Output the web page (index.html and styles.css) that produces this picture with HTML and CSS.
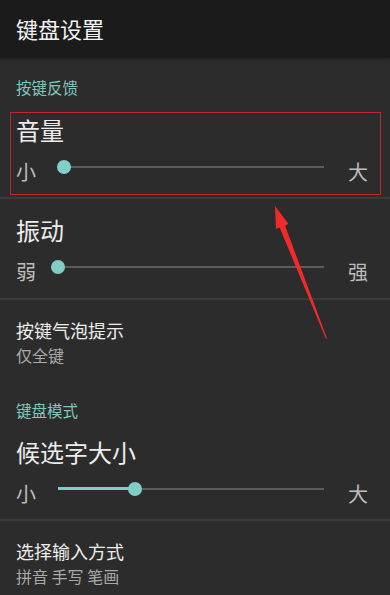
FILE: index.html
```html
<!DOCTYPE html>
<html lang="zh-CN">
<head>
<meta charset="utf-8">
<link rel="stylesheet" href="styles.css">
</head>
<body>
<div class="screen">
  <header class="appbar"><span class="appbar-title">键盘设置</span></header>

  <div class="section-head">按键反馈</div>

  <div class="item item-first">
    <div class="item-title">音量</div>
    <div class="slider-row">
      <span class="slider-label">小</span>
      <div class="slider">
        <div class="track"></div>
        <div class="thumb" style="left:0px"></div>
      </div>
      <span class="slider-label">大</span>
    </div>
  </div>
  <div class="divider"></div>

  <div class="item item-slider">
    <div class="item-title">振动</div>
    <div class="slider-row">
      <span class="slider-label">弱</span>
      <div class="slider">
        <div class="track"></div>
        <div class="thumb" style="left:-6px"></div>
      </div>
      <span class="slider-label">强</span>
    </div>
  </div>
  <div class="divider"></div>

  <div class="item item-text">
    <div class="text-title">按键气泡提示</div>
    <div class="text-sub">仅全键</div>
  </div>

  <div class="section-head section-head-2">键盘模式</div>

  <div class="item item-first">
    <div class="item-title">候选字大小</div>
    <div class="slider-row">
      <span class="slider-label">小</span>
      <div class="slider">
        <div class="track"></div>
        <div class="fill" style="width:71px"></div>
        <div class="thumb" style="left:71px"></div>
      </div>
      <span class="slider-label">大</span>
    </div>
  </div>
  <div class="divider"></div>

  <div class="item item-text">
    <div class="text-title">选择输入方式</div>
    <div class="text-sub">拼音 手写 笔画</div>
  </div>

  <div class="highlight-box"></div>
  <svg class="arrow" width="390" height="595" viewBox="0 0 390 595">
    <polygon points="275,206 288.5,224 285,225.6 327,338.5 325.8,338.5 279.6,227.6 276,229" fill="#f22a2a"/>
  </svg>
</div>
</body>
</html>
```

FILE: styles.css
```css
* { box-sizing: border-box; }
html, body {
  margin: 0;
  padding: 0;
  background: #2c2c2c;
}
body {
  font-family: "Noto Sans CJK SC", "Noto Sans", sans-serif;
  color: #ececec;
}
.screen {
  position: relative;
  width: 390px;
  height: 595px;
  overflow: hidden;
  background: #2c2c2c;
}
.appbar {
  height: 58px;
  background: #1b1b1b;
  display: flex;
  align-items: center;
  padding-left: 16px;
  box-shadow: 0 1px 3px rgba(0,0,0,0.35);
}
.appbar-title {
  font-size: 22px;
  line-height: 1;
  color: #f2f2f2;
  margin-top: -2px;
}
.section-head {
  height: 58px;
  display: flex;
  align-items: center;
  padding-left: 16px;
  font-size: 15.5px;
  color: #7fc7bd;
}
.section-head-2 {
  height: 56px;
}
.item {
  padding-left: 16px;
}
.item-first {
  height: 81px;
}
.item-slider {
  height: 99px;
  padding-top: 17px;
}
.item-title {
  height: 28px;
  font-size: 24px;
  line-height: 28px;
  color: #ededed;
}
.slider-row {
  height: 46px;
  display: flex;
  align-items: center;
}
.slider-label {
  width: 19px;
  font-size: 20px;
  line-height: 20px;
  color: #bdbdbd;
  margin-top: 9px;
  text-align: center;
}
.slider {
  position: relative;
  width: 267px;
  height: 14px;
  margin: 0 24px 0 22px;
}
.track {
  position: absolute;
  left: 1px;
  right: 0;
  top: 6px;
  height: 2px;
  background: #5c5c5c;
}
.fill {
  position: absolute;
  left: 1px;
  top: 5px;
  height: 3px;
  background: #7fcdc3;
}
.thumb {
  position: absolute;
  top: 0;
  width: 14px;
  height: 14px;
  border-radius: 50%;
  background: #80cec5;
}
.divider {
  height: 2px;
  background: #3b3b3b;
}
.item-text {
  height: 82px;
  padding-top: 19px;
}
.text-title {
  height: 22px;
  font-size: 18px;
  line-height: 22px;
  color: #ececec;
}
.text-sub {
  height: 22px;
  margin-top: 3px;
  font-size: 16px;
  line-height: 22px;
  color: #a9a9a9;
}
.highlight-box {
  position: absolute;
  left: 10px;
  top: 112px;
  width: 371px;
  height: 83px;
  border: 1px solid #c0272d;
  pointer-events: none;
}
.arrow {
  position: absolute;
  left: 0;
  top: 0;
  pointer-events: none;
}
```
